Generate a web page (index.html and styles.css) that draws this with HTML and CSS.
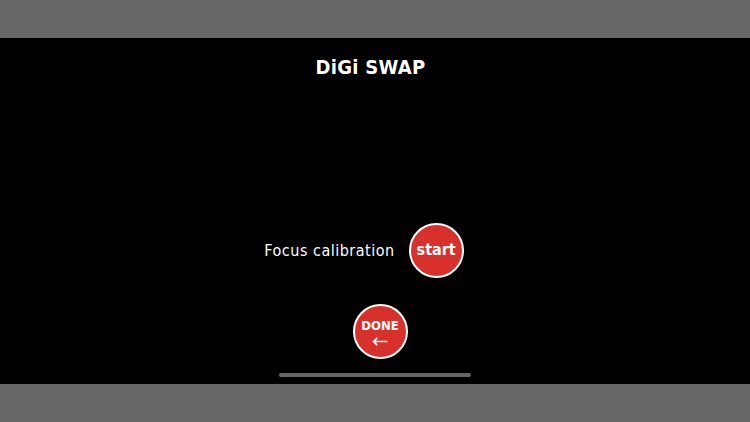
FILE: index.html
```html
<!DOCTYPE html>
<html>
<head>
<meta charset="utf-8">
<link rel="stylesheet" href="styles.css">
</head>
<body>
<div class="band"></div>
<main class="screen">
  <h1 class="title">DiGi SWAP</h1>
  <div class="row">
    <span class="label">Focus calibration</span>
    <button class="btn start">start</button>
  </div>
  <button class="btn done"><span class="done-text">DONE</span><svg class="arrow" width="16" height="9" viewBox="0 0 16 9"><path d="M15.5 4.5H1.5M5.2 0.8L1.5 4.5L5.2 8.2" fill="none" stroke="#fff" stroke-width="1.7"/></svg></button>
  <div class="home"></div>
</main>
<div class="band"></div>
</body>
</html>
```
FILE: styles.css
```css
html, body { margin: 0; padding: 0; }
body {
  width: 750px; height: 422px; overflow: hidden;
  background: #666666;
  font-family: "DejaVu Sans", "Liberation Sans", sans-serif;
  font-stretch: condensed;
  display: flex; flex-direction: column;
}
.band { height: 38px; background: #666666; flex: none; }
.screen {
  height: 346px; background: #000; color: #fff;
  display: flex; flex-direction: column; align-items: center;
  flex: none;
}
.title {
  margin: 17px 9px 0 0; font-size: 20px; font-weight: bold; line-height: 24px;
  letter-spacing: 0.3px;
}
.row {
  margin-top: 144px; display: flex; align-items: center; gap: 14px;
  margin-right: 22px;
}
.label { font-size: 16px; letter-spacing: 0.5px; }
.btn {
  width: 55px; height: 55px; border-radius: 50%;
  background: #d8312c; border: 2px solid #fff; color: #fff;
  font-family: inherit; font-stretch: condensed; padding: 0;
  display: flex; flex-direction: column; align-items: center; justify-content: center;
  box-sizing: border-box;
}
.start { font-size: 16px; font-weight: bold; padding-bottom: 3px; }
.done { margin-top: 26px; margin-left: 10px; gap: 4px; padding-top: 2px; }
.done-text { font-size: 13px; font-weight: bold; line-height: 14px; }
.arrow { display: block; }
.home {
  margin-top: 14px; width: 192px; height: 4px; border-radius: 2px; background: #666666;
}
```
